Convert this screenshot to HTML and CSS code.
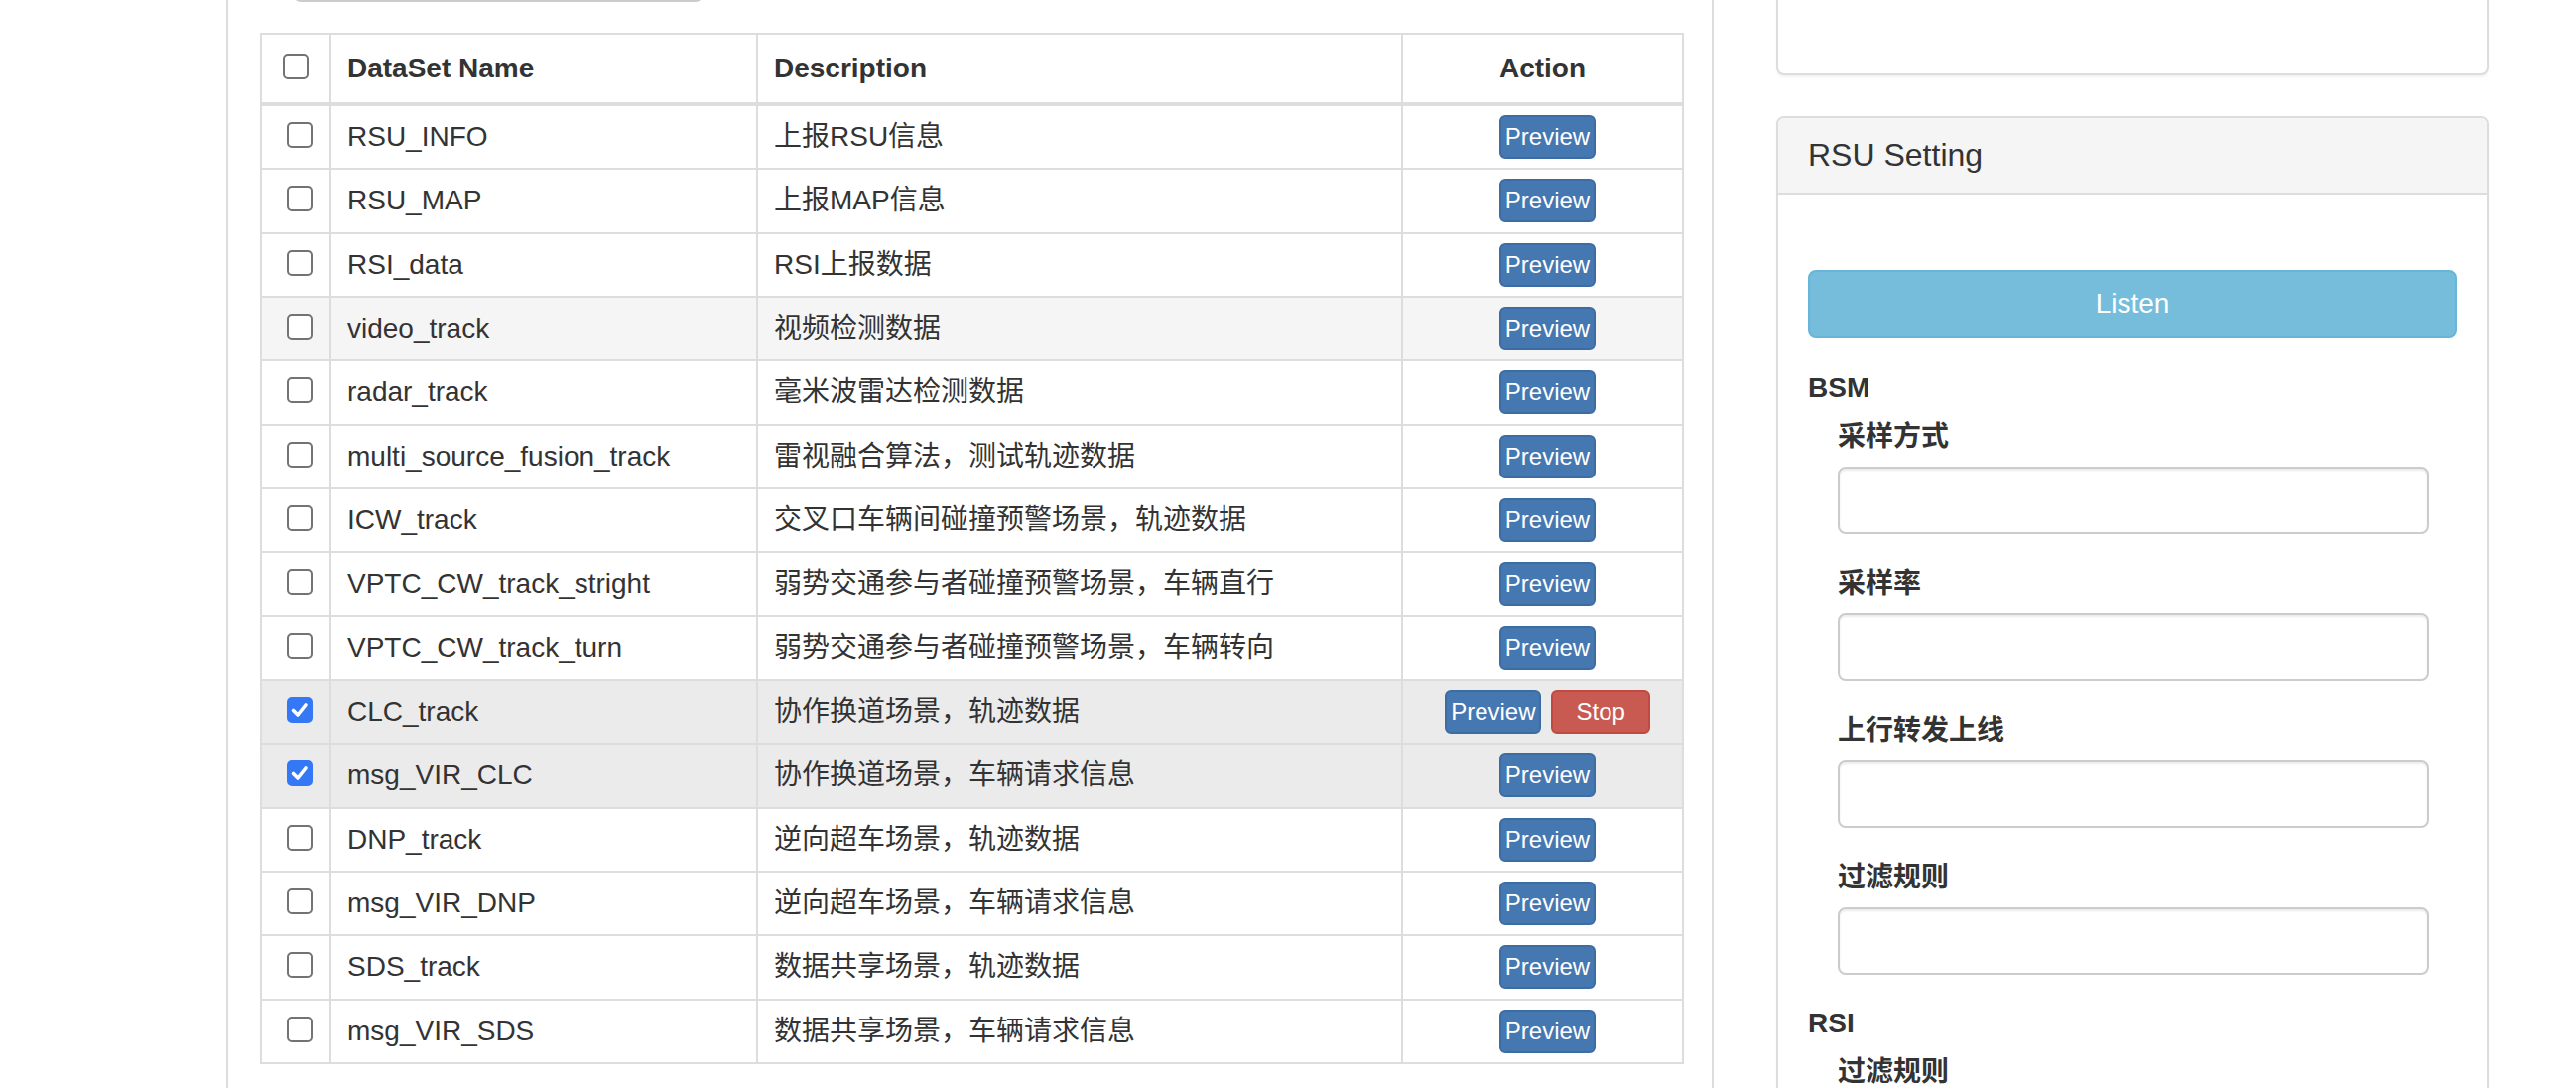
FILE: index.html
```html
<!DOCTYPE html>
<html lang="zh-CN">
<head>
<meta charset="utf-8">
<title>DataSet</title>
<link rel="stylesheet" href="styles.css">
</head>
<body>
<div class="page">
  <div class="main-panel">
    <input class="search-box" type="text">
    <table class="data-table">
      <colgroup>
        <col class="col-check"><col class="col-name"><col class="col-desc"><col class="col-action">
      </colgroup>
      <thead>
        <tr>
          <th><span class="cb cb-head"></span></th>
          <th>DataSet Name</th>
          <th>Description</th>
          <th class="center">Action</th>
        </tr>
      </thead>
      <tbody>
        <tr><td><span class="cb"></span></td><td>RSU_INFO</td><td>上报RSU信息</td><td><div class="actions"><button class="btn btn-preview">Preview</button></div></td></tr>
        <tr><td><span class="cb"></span></td><td>RSU_MAP</td><td>上报MAP信息</td><td><div class="actions"><button class="btn btn-preview">Preview</button></div></td></tr>
        <tr><td><span class="cb"></span></td><td>RSI_data</td><td>RSI上报数据</td><td><div class="actions"><button class="btn btn-preview">Preview</button></div></td></tr>
        <tr class="row-hover"><td><span class="cb"></span></td><td>video_track</td><td>视频检测数据</td><td><div class="actions"><button class="btn btn-preview">Preview</button></div></td></tr>
        <tr><td><span class="cb"></span></td><td>radar_track</td><td>毫米波雷达检测数据</td><td><div class="actions"><button class="btn btn-preview">Preview</button></div></td></tr>
        <tr><td><span class="cb"></span></td><td>multi_source_fusion_track</td><td>雷视融合算法，测试轨迹数据</td><td><div class="actions"><button class="btn btn-preview">Preview</button></div></td></tr>
        <tr><td><span class="cb"></span></td><td>ICW_track</td><td>交叉口车辆间碰撞预警场景，轨迹数据</td><td><div class="actions"><button class="btn btn-preview">Preview</button></div></td></tr>
        <tr><td><span class="cb"></span></td><td>VPTC_CW_track_stright</td><td>弱势交通参与者碰撞预警场景，车辆直行</td><td><div class="actions"><button class="btn btn-preview">Preview</button></div></td></tr>
        <tr><td><span class="cb"></span></td><td>VPTC_CW_track_turn</td><td>弱势交通参与者碰撞预警场景，车辆转向</td><td><div class="actions"><button class="btn btn-preview">Preview</button></div></td></tr>
        <tr class="row-active"><td><span class="cb checked"><svg viewBox="0 0 26 26" width="26" height="26"><path d="M6.5 13.5 L11 18 L19 8" fill="none" stroke="#fff" stroke-width="3.6" stroke-linecap="round" stroke-linejoin="round"/></svg></span></td><td>CLC_track</td><td>协作换道场景，轨迹数据</td><td><div class="actions"><button class="btn btn-preview">Preview</button><button class="btn btn-stop">Stop</button></div></td></tr>
        <tr class="row-active"><td><span class="cb checked"><svg viewBox="0 0 26 26" width="26" height="26"><path d="M6.5 13.5 L11 18 L19 8" fill="none" stroke="#fff" stroke-width="3.6" stroke-linecap="round" stroke-linejoin="round"/></svg></span></td><td>msg_VIR_CLC</td><td>协作换道场景，车辆请求信息</td><td><div class="actions"><button class="btn btn-preview">Preview</button></div></td></tr>
        <tr><td><span class="cb"></span></td><td>DNP_track</td><td>逆向超车场景，轨迹数据</td><td><div class="actions"><button class="btn btn-preview">Preview</button></div></td></tr>
        <tr><td><span class="cb"></span></td><td>msg_VIR_DNP</td><td>逆向超车场景，车辆请求信息</td><td><div class="actions"><button class="btn btn-preview">Preview</button></div></td></tr>
        <tr><td><span class="cb"></span></td><td>SDS_track</td><td>数据共享场景，轨迹数据</td><td><div class="actions"><button class="btn btn-preview">Preview</button></div></td></tr>
        <tr><td><span class="cb"></span></td><td>msg_VIR_SDS</td><td>数据共享场景，车辆请求信息</td><td><div class="actions"><button class="btn btn-preview">Preview</button></div></td></tr>
      </tbody>
    </table>
  </div>

  <div class="side">
    <div class="card card-top"></div>
    <div class="card card-rsu">
      <div class="card-head"><h3 class="card-title">RSU Setting</h3></div>
      <div class="card-body">
        <div class="spacer"></div>
        <button class="btn-listen">Listen</button>
        <div class="section-title">BSM</div>
        <div class="field">
          <label class="field-label">采样方式</label>
          <input class="field-input" type="text">
        </div>
        <div class="field">
          <label class="field-label">采样率</label>
          <input class="field-input" type="text">
        </div>
        <div class="field">
          <label class="field-label">上行转发上线</label>
          <input class="field-input" type="text">
        </div>
        <div class="field">
          <label class="field-label">过滤规则</label>
          <input class="field-input" type="text">
        </div>
        <div class="section-title section-gap">RSI</div>
        <div class="field">
          <label class="field-label">过滤规则</label>
          <input class="field-input" type="text">
        </div>
      </div>
    </div>
  </div>
</div>
</body>
</html>
```

FILE: styles.css
```css
* { box-sizing: border-box; }

html, body {
  margin: 0;
  padding: 0;
  background: #fff;
}

body {
  font-family: "Liberation Sans", Arial, "Noto Sans CJK SC", sans-serif;
  font-size: 28px;
  line-height: 40px;
  color: #333;
  overflow: hidden;
}

.page {
  display: flex;
  align-items: flex-start;
  gap: 63px;
  padding-left: 228px;
}

/* ---------- main panel ---------- */
.main-panel {
  flex: none;
  width: 1499px;
  margin-top: -100px;
  border: 2px solid #ddd;
  border-radius: 8px;
  padding: 0 28px 80px 32px;
  background: #fff;
}

.search-box {
  display: block;
  width: 414px;
  height: 62px;
  margin: 38px 0 0 33px;
  border: 2px solid #ccc;
  border-radius: 8px;
  box-shadow: inset 0 2px 2px rgba(0, 0, 0, 0.075);
  background: #fff;
}

.data-table {
  margin-top: 31px;
  width: 1435px;
  table-layout: fixed;
  border-collapse: separate;
  border-spacing: 0;
  border-top: 2px solid #ddd;
  border-left: 2px solid #ddd;
}

.col-check { width: 70px; }
.col-name { width: 430px; }
.col-desc { width: 650px; }
.col-action { width: 283px; }

.data-table th,
.data-table td {
  border-right: 2px solid #ddd;
  border-bottom: 2px solid #ddd;
  padding: 0 16px;
  vertical-align: middle;
  text-align: left;
  white-space: nowrap;
}

.data-table th {
  height: 72px;
  border-bottom-width: 4px;
  font-weight: bold;
}

.data-table th.center { text-align: center; }

.data-table td { height: 64.33px; }

.row-hover td { background: #f5f5f5; }
.row-active td { background: #ebebeb; }

.cb {
  display: block;
  width: 26px;
  height: 26px;
  margin: -4px 0 0 9px;
  border: 2px solid #737373;
  border-radius: 5px;
  background: #fff;
}

.cb.cb-head { margin-left: 5px; }

.cb.checked {
  background: #3478f6;
  border-color: #3478f6;
}

.cb.checked svg {
  display: block;
  margin: -2px;
}

.actions {
  display: flex;
  justify-content: center;
  gap: 10px;
  padding-left: 10px;
}

.btn {
  height: 44px;
  padding: 0 4px;
  border: 2px solid;
  border-radius: 6px;
  font-family: "Liberation Sans", Arial, sans-serif;
  font-size: 24px;
  line-height: 38px;
  color: #fff;
  cursor: pointer;
}

.btn-preview {
  background: #4577b1;
  border-color: #3d6ca5;
}

.btn-stop {
  padding: 0 23px;
  background: #c95a52;
  border-color: #c04a42;
}

/* ---------- side column ---------- */
.side {
  flex: none;
  width: 718px;
}

.card {
  border: 2px solid #ddd;
  border-radius: 8px;
  background: #fff;
  box-shadow: 0 2px 2px rgba(0, 0, 0, 0.05);
}

.card-top {
  margin-top: -100px;
  height: 176px;
}

.card-rsu { margin-top: 41px; }

.card-head {
  background: #f5f5f5;
  border-bottom: 2px solid #ddd;
  border-radius: 6px 6px 0 0;
  padding: 20px 30px;
}

.card-title {
  margin: 0;
  font-size: 32px;
  line-height: 35px;
  font-weight: normal;
}

.card-body {
  padding: 30px 30px 300px;
}

.spacer { height: 46px; }

.btn-listen {
  display: block;
  width: 100%;
  height: 68px;
  background: #76bcdb;
  border: 2px solid #67b5d8;
  border-radius: 8px;
  color: #fff;
  font-family: "Liberation Sans", Arial, sans-serif;
  font-size: 28px;
  line-height: 64px;
  padding: 0;
}

.section-title {
  margin-top: 31px;
  font-weight: bold;
  line-height: 40px;
}

.section-title.section-gap { margin-top: 29px; }

.field {
  margin: 9px 0 0 30px;
}

.field + .field { margin-top: 30px; }

.field-label {
  display: block;
  font-weight: bold;
  line-height: 40px;
  margin-bottom: 10px;
}

.field-input {
  display: block;
  width: 596px;
  height: 68px;
  border: 2px solid #ccc;
  border-radius: 8px;
  box-shadow: inset 0 2px 2px rgba(0, 0, 0, 0.075);
  background: #fff;
}
```
